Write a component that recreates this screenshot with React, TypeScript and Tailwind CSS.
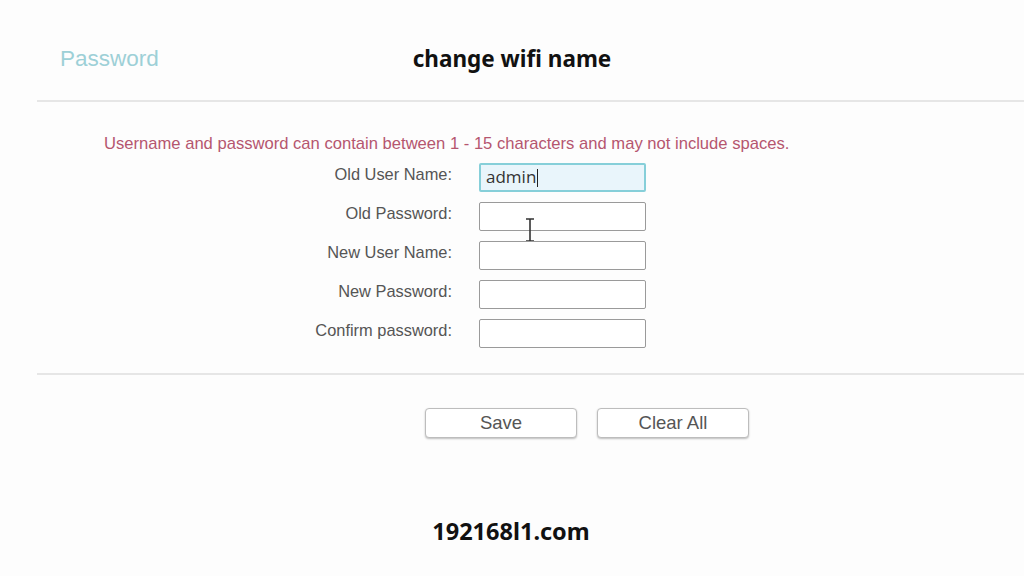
import React from 'react'

const rows = [
  { label: 'Old User Name:', active: true },
  { label: 'Old Password:' },
  { label: 'New User Name:' },
  { label: 'New Password:' },
  { label: 'Confirm password:' },
]

const TextCursor = () => (
  <svg width="10" height="24" viewBox="0 0 10 24" className="block">
    <path d="M1 1h8M5 1v22M1 23h8" stroke="#333" strokeWidth="1.6" fill="none" />
  </svg>
)

export default function App() {
  return (
    <div className="w-[1024px] h-[576px] bg-[#fdfdfd] overflow-hidden flex flex-col font-['Liberation_Sans',Arial,sans-serif]">
      {/* header */}
      <div className="grid grid-cols-[1fr_auto_1fr] items-center h-[100px] pt-[18px]">
        <div className="pl-[60px] text-[22.5px] text-[#9dd0d7]">Password</div>
        <div className="font-['Noto_Sans',sans-serif] font-bold text-[22.5px] text-[#111]">change wifi name</div>
        <div />
      </div>
      <div className="ml-[37px] border-t-2 border-[#e6e6e6]" />

      {/* form */}
      <div className="pt-[33px] pl-[104px] text-[16.6px] text-[#b5566f] leading-[18px] whitespace-nowrap">
        Username and password can contain between 1 - 15 characters and may not include spaces.
      </div>
      <div className="flex flex-col gap-[10px] pt-[10px]">
        {rows.map((r, i) => (
          <div key={r.label} className="flex items-center h-[29px]">
            <div className="w-[452px] text-right text-[16.4px] text-[#555] mb-[6px]">{r.label}</div>
            <div
              className={
                'ml-[27px] w-[167px] h-[29px] rounded-[2px] border flex items-center px-[5px] relative ' +
                (r.active ? 'border-2 border-[#86cfd9] bg-[#e9f5fb]' : 'border-[#9a9a9a] bg-white')
              }
            >
              {r.active && (
                <span className="text-[17px] text-[#333] font-['Open_Sans',sans-serif] leading-none">
                  admin<span className="inline-block w-px h-[18px] bg-[#222] align-middle ml-px" />
                </span>
              )}
              {i === 1 && (
                <div className="absolute left-[45px] top-[15px]">
                  <TextCursor />
                </div>
              )}
            </div>
          </div>
        ))}
      </div>

      <div className="mt-[25px] ml-[37px] border-t-2 border-[#e6e6e6]" />

      {/* buttons */}
      <div className="flex gap-[20px] pl-[425px] pt-[33px]">
        <button className="w-[152px] h-[30px] rounded-[4px] border border-[#bdbdbd] bg-white shadow-[0_1px_2px_rgba(0,0,0,0.25)] text-[18.5px] text-[#555]">
          Save
        </button>
        <button className="w-[152px] h-[30px] rounded-[4px] border border-[#bdbdbd] bg-white shadow-[0_1px_2px_rgba(0,0,0,0.25)] text-[18.5px] text-[#555]">
          Clear All
        </button>
      </div>

      {/* footer */}
      <div className="flex-1 flex items-center justify-center pt-[50px]">
        <div className="font-['Noto_Sans',sans-serif] font-bold text-[23.5px] text-[#111] pr-[2px]">192168l1.com</div>
      </div>
    </div>
  )
}
